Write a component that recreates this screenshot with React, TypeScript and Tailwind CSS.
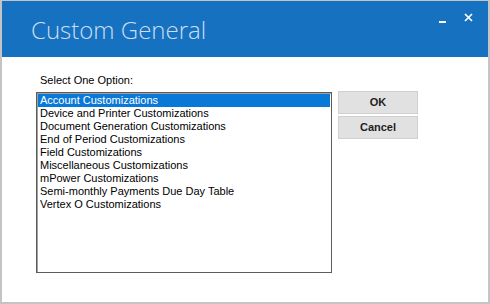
import React from "react";

const items = [
  "Account Customizations",
  "Device and Printer Customizations",
  "Document Generation Customizations",
  "End of Period Customizations",
  "Field Customizations",
  "Miscellaneous Customizations",
  "mPower Customizations",
  "Semi-monthly Payments Due Day Table",
  "Vertex O Customizations",
];

export default function App() {
  return (
    <div className="w-[490px] h-[304px] bg-white border-x-2 border-b-2 border-t border-[#c4c4c4] flex flex-col overflow-hidden">
      <div className="h-[56px] bg-[#1771c1] flex items-start justify-between">
        <div
          className="pl-[29px] pt-[14px] text-[24px] leading-[30px] font-light text-[#cadff2]"
          style={{ fontFamily: '"Open Sans", "Noto Sans", sans-serif' }}
        >
          Custom General
        </div>
        <div className="flex items-start pt-[11px] pr-[15px] gap-[18px]">
          <div className="mt-[9px] w-[7px] h-[2px] bg-white" />
          <svg width="9" height="9" viewBox="0 0 9 9" className="mt-[1px]">
            <path d="M1 1 L8 8 M8 1 L1 8" stroke="white" strokeWidth="1.7" />
          </svg>
        </div>
      </div>
      <div
        className="flex-1 pl-[34px] pt-[17px] text-[11px] text-black"
        style={{ fontFamily: '"Liberation Sans", Arial, sans-serif' }}
      >
        <div className="pl-[4px] leading-[13px] h-[18px]">Select One Option:</div>
        <div className="flex items-start">
          <div className="w-[296px] h-[181px] border border-[#5c5c5c] shadow-[inset_1px_1px_0_#a0a0a0] pt-[1px] px-[1px]">
            {items.map((it, i) => (
              <div
                key={it}
                className={
                  "h-[13px] leading-[13px] pl-[2px] whitespace-nowrap " +
                  (i === 0 ? "bg-[#0a78d7] text-white" : "")
                }
              >
                {it}
              </div>
            ))}
          </div>
          <div className="ml-[6px] flex flex-col gap-[2px] -mt-[1px]">
            <button className="w-[80px] h-[23px] bg-[#e1e1e1] border border-[#d0d0d0] font-bold text-[11px] text-[#1e1e1e]">
              OK
            </button>
            <button className="w-[80px] h-[23px] bg-[#e1e1e1] border border-[#d0d0d0] font-bold text-[11px] text-[#1e1e1e]">
              Cancel
            </button>
          </div>
        </div>
      </div>
    </div>
  );
}
